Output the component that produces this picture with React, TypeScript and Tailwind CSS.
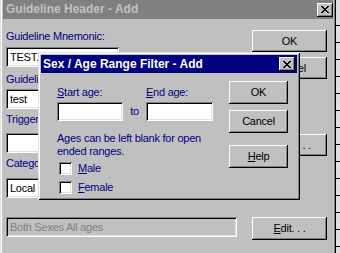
import React from 'react';

const raised = 'shadow-[inset_-1px_-1px_0_#000,inset_1px_1px_0_#fff,inset_-2px_-2px_0_#808080]';
const sunken = 'shadow-[inset_1px_1px_0_#808080,inset_-1px_-1px_0_#fff,inset_2px_2px_0_#000,inset_-2px_-2px_0_#dfdfdf]';

const CloseGlyph = () => (
  <svg width="8" height="7" viewBox="0 0 8 7" shapeRendering="crispEdges">
    <path d="M0 0h2v1H0zM6 0h2v1H6zM1 1h2v1H1zM5 1h2v1H5zM2 2h4v1H2zM3 3h2v1H3zM2 4h4v1H2zM1 5h2v1H1zM5 5h2v1H5zM0 6h2v1H0zM6 6h2v1H6z" fill="#000" />
  </svg>
);

const CloseButton = () => (
  <div className={`w-[16px] h-[14px] bg-[#c0c0c0] flex items-center justify-center ${raised}`}>
    <CloseGlyph />
  </div>
);

const Button = ({ children, className = '' }: { children: React.ReactNode; className?: string }) => (
  <div className={`bg-[#c0c0c0] text-black flex items-center justify-center ${raised} ${className}`}>
    {children}
  </div>
);

const Field = ({ children, className = '' }: { children?: React.ReactNode; className?: string }) => (
  <div className={`h-[20px] bg-white text-black pl-[4px] flex items-center ${sunken} ${className}`}>{children}</div>
);

const Check = ({ first, rest }: { first: string; rest: string }) => (
  <div className="flex items-center h-[13px]">
    <div className={`w-[13px] h-[13px] bg-white ml-[2px] ${sunken}`} />
    <span className="ml-[6px] text-[#000080]">
      <span className="underline">{first}</span>
      {rest}
    </span>
  </div>
);

const Label = ({ children, className = '' }: { children: React.ReactNode; className?: string }) => (
  <div className={`h-[13px] leading-[13px] text-[#000080] whitespace-nowrap ${className}`}>{children}</div>
);

export default function App() {
  return (
    <div className="w-[340px] h-[253px] overflow-hidden relative flex font-['Liberation_Sans',Arial,sans-serif] text-[11px] leading-[13px] tracking-[-0.25px]">
      {/* main window */}
      <div className="w-[336px] h-[280px] shrink-0 bg-[#c0c0c0] px-[3px] shadow-[inset_1px_0_0_#dfdfdf,inset_2px_0_0_#fff,inset_-1px_0_0_#000,inset_-2px_0_0_#808080]">
        <div className="h-[19px] bg-[#808080] flex items-center justify-between pl-[3px]">
          <span className="text-[12px] font-bold text-[#c0c0c0] tracking-normal">Guideline Header - Add</span>
          <CloseButton />
        </div>

        <div className="flex pl-[3px]">
          <div className="w-[231px] flex flex-col">
            <Label className="mt-[11px]">Guideline Mnemonic:</Label>
            <Field className="mt-[4px] w-[113px]">TEST.</Field>
            <Label className="mt-[6px]">Guideline Name:</Label>
            <Field className="mt-[3px] w-[113px]">test</Field>
            <Label className="mt-[4px]">Trigger Event:</Label>
            <Field className="mt-[7px] w-[113px]" />
            <Label className="mt-[4px]">Category:</Label>
            <Field className="mt-[8px] w-[113px]">Local</Field>
            <div className={`mt-[19px] h-[20px] w-[231px] bg-[#c0c0c0] text-[#808080] pl-[4px] flex items-center ${sunken}`}>
              Both Sexes All ages
            </div>
          </div>

          <div className="ml-[15px] w-[75px] flex flex-col">
            <Button className="mt-[11px] h-[22px]">OK</Button>
            <Button className="mt-[5px] h-[22px]">Cancel</Button>
            <Button className="mt-[55px] h-[22px]">Select. . .</Button>
            <Button className="mt-[61px] h-[23px]">
              <span className="underline">E</span>dit. . .
            </Button>
          </div>
        </div>
      </div>

      {/* window behind, right edge */}
      <div className="flex-1 bg-[repeating-linear-gradient(to_bottom,#dfdfdf_0px,#dfdfdf_16px,#000_16px,#000_17px)] bg-[position:0_9px]" />

      {/* modal dialog */}
      <div className="absolute left-[38px] top-[52px] w-[262px] h-[148px] bg-[#c0c0c0] p-[3px] shadow-[inset_1px_1px_0_#dfdfdf,inset_-1px_-1px_0_#000,inset_2px_2px_0_#fff,inset_-2px_-2px_0_#808080]">
        <div className="h-[18px] bg-[#000080] flex items-center justify-between pl-[2px] pr-[2px]">
          <span className="text-[12px] font-bold text-white tracking-normal">Sex / Age Range Filter - Add</span>
          <CloseButton />
        </div>

        <div className="flex">
          <div className="pl-[16px] w-[188px] flex flex-col">
            <div className="mt-[13px] flex">
              <Label className="w-[89px]">
                <span className="underline">S</span>tart age:
              </Label>
              <Label>
                <span className="underline">E</span>nd age:
              </Label>
            </div>
            <div className="mt-[3px] flex items-center">
              <Field className="w-[66px] !h-[19px]" />
              <span className="w-[23px] text-center text-[#000080]">to</span>
              <Field className="w-[67px] !h-[19px]" />
            </div>
            <div className="mt-[11px] text-[#000080] whitespace-nowrap">
              Ages can be left blank for open
              <br />
              ended ranges.
            </div>
            <div className="mt-[4px] flex flex-col gap-[6px]">
              <Check first="M" rest="ale" />
              <Check first="F" rest="emale" />
            </div>
          </div>

          <div className="w-[59px] flex flex-col">
            <Button className="mt-[8px] h-[23px]">OK</Button>
            <Button className="mt-[6px] h-[23px]">Cancel</Button>
            <Button className="mt-[12px] h-[23px]">
              <span className="underline">H</span>elp
            </Button>
          </div>
        </div>
      </div>
    </div>
  );
}
